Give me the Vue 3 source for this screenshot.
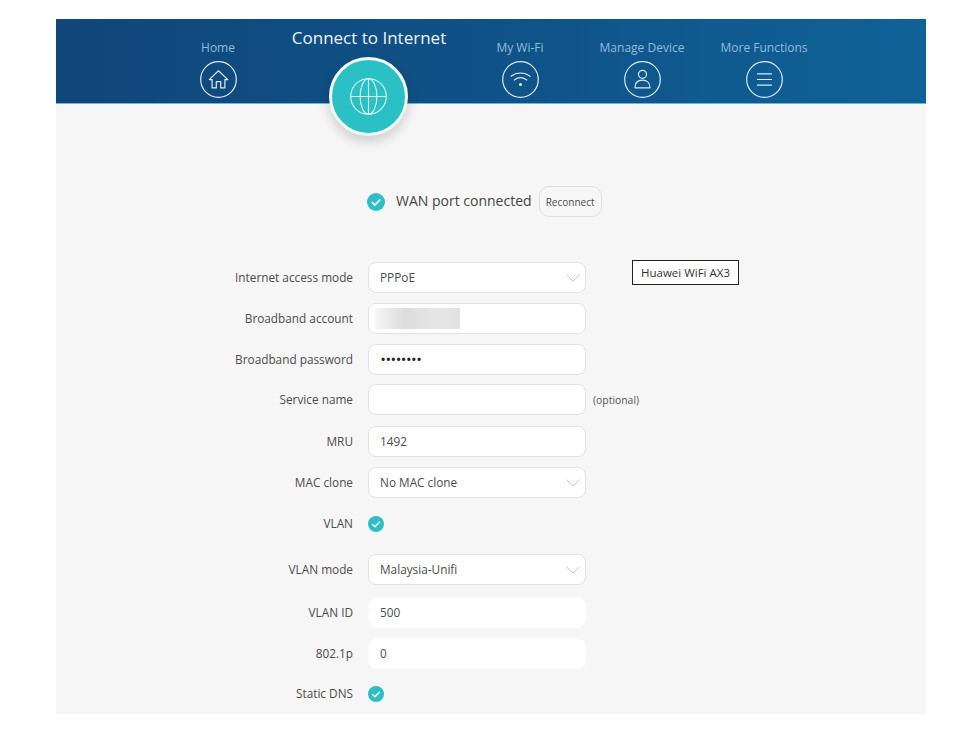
<script setup>
const navLeft = [{ label: 'Home', icon: 'home' }]
const navRight = [
  { label: 'My Wi-Fi', icon: 'wifi' },
  { label: 'Manage Device', icon: 'user' },
  { label: 'More Functions', icon: 'menu' },
]
const rows = [
  { label: 'Internet access mode', kind: 'select', value: 'PPPoE' },
  { label: 'Broadband account', kind: 'blur' },
  { label: 'Broadband password', kind: 'password', value: '••••••••', cls: 'tight' },
  { label: 'Service name', kind: 'input', value: '', note: '(optional)' },
  { label: 'MRU', kind: 'input', value: '1492', cls: 'mru' },
  { label: 'MAC clone', kind: 'select', value: 'No MAC clone' },
  { label: 'VLAN', kind: 'check', cls: 'vlan-check' },
  { label: 'VLAN mode', kind: 'select', value: 'Malaysia-Unifi', cls: 'vlan-mode' },
  { label: 'VLAN ID', kind: 'plain', value: '500' },
  { label: '802.1p', kind: 'plain', value: '0', cls: 'tight' },
  { label: 'Static DNS', kind: 'check' },
]
</script>

<template>
  <div class="screen">
    <div class="page">
      <header class="header">
        <div v-for="n in navLeft" :key="n.label" class="nav-item">
          <span class="nav-label">{{ n.label }}</span>
          <span class="nav-icon">
            <svg viewBox="0 0 37 37" width="37" height="37" fill="none" stroke="#dfeaf3" stroke-width="1.2" stroke-linejoin="round" stroke-linecap="round">
              <circle cx="18.5" cy="18.5" r="17.8" />
              <path d="M9.200 18.600 18.500 9.800l9.300 8.800h-2.900v8.300h-4.200v-6.200h-4.400v6.200h-4.200v-8.300z" />
            </svg>
          </span>
        </div>
        <div class="nav-item active">
          <span class="active-label">Connect to Internet</span>
          <span class="globe">
            <svg viewBox="0 0 37 37" width="37" height="37" fill="none" stroke="#e0f6f6" stroke-width="1.1">
              <circle cx="18.5" cy="18.5" r="17.8" />
              <ellipse cx="18.5" cy="18.5" rx="8.4" ry="17.8" />
              <path d="M18.5.7v35.6M.7 18.5h35.600" />
            </svg>
          </span>
        </div>
        <div v-for="n in navRight" :key="n.label" class="nav-item">
          <span class="nav-label">{{ n.label }}</span>
          <span class="nav-icon">
            <svg viewBox="0 0 37 37" width="37" height="37" fill="none" stroke="#dfeaf3" stroke-width="1.2" stroke-linecap="round" stroke-linejoin="round">
              <circle cx="18.5" cy="18.5" r="17.8" />
              <template v-if="n.icon === 'wifi'">
                <path d="M9 15.200c5.600-4.300 13.400-4.300 19 0M12.300 19c3.800-2.800 8.600-2.800 12.400 0" />
                <circle cx="18.500" cy="23.500" r="1.500" fill="#dfeaf3" stroke="none" />
              </template>
              <template v-else-if="n.icon === 'user'">
                <circle cx="18.500" cy="13.300" r="4" />
                <path d="M11 26.800c0-5 3.200-7.600 7.500-7.600s7.500 2.600 7.500 7.600z" />
              </template>
              <template v-else>
                <path d="M11.500 12.800h14M11.500 18.500h14M11.500 24.200h14" />
              </template>
            </svg>
          </span>
        </div>
      </header>

      <div class="status">
        <span class="check big">
          <svg viewBox="0 0 16 16"><path d="M4.300 8.200 7 10.800l4.800-5" /></svg>
        </span>
        <span class="status-text">WAN port connected</span>
        <button class="reconnect" type="button">Reconnect</button>
      </div>

      <form class="form" @submit.prevent>
        <div v-for="r in rows" :key="r.label" class="row" :class="r.cls">
          <label class="label">{{ r.label }}</label>
          <span v-if="r.kind === 'check'" class="check">
            <svg viewBox="0 0 16 16"><path d="M4.300 8.200 7 10.800l4.800-5" /></svg>
          </span>
          <div v-else class="field" :class="{ plain: r.kind === 'plain' }">
            <span v-if="r.kind === 'blur'" class="blurred"></span>
            <span v-else-if="r.kind === 'password'" class="dots">{{ r.value }}</span>
            <span v-else>{{ r.value }}</span>
            <svg v-if="r.kind === 'select'" class="chevron" viewBox="0 0 14 8" width="14" height="8" fill="none" stroke="#c4c6c8" stroke-width="1">
              <path d="M.5.800 7 7l6.500-6.200" />
            </svg>
          </div>
          <span v-if="r.note" class="note">{{ r.note }}</span>
        </div>
      </form>

      <div class="tooltip">Huawei WiFi AX3</div>
    </div>
  </div>
</template>

<style>
html, body { margin: 0; background: #fff; }
</style>

<style scoped>
.screen {
  width: 976px;
  height: 740px;
  padding-top: 19px;
  box-sizing: border-box;
  background: #fff;
  overflow: hidden;
  font-family: "Open Sans", "Noto Sans", "Liberation Sans", sans-serif;
  color: #4a4a4a;
}
.page {
  position: relative;
  width: 870px;
  height: 695px;
  margin-left: 56px;
  background: #f6f6f6;
  overflow: hidden;
}
.header {
  display: flex;
  box-sizing: border-box;
  height: 85px;
  padding-left: 101px;
  background: linear-gradient(90deg, #10467a 0%, #0f5287 50%, #0f6298 100%);
  border-bottom: 1px solid #6fb4dc;
}
.nav-item {
  width: 122px;
  display: flex;
  flex-direction: column;
  align-items: center;
  flex: none;
}
.nav-label {
  flex: none;
  margin-top: 20px;
  height: 17px;
  line-height: 17px;
  font-size: 12px;
  color: #8fbcdc;
  white-space: nowrap;
}
.nav-icon {
  display: block;
  flex: none;
  height: 37px;
  margin-top: 5px;
}
.nav-icon svg, .globe svg { display: block; }
.active {
  width: 180px;
  position: relative;
  z-index: 2;
}
.active-label {
  flex: none;
  margin-top: 8px;
  height: 21px;
  line-height: 21px;
  font-size: 17px;
  color: #eef4f9;
  white-space: nowrap;
}
.globe {
  flex: none;
  width: 79px;
  height: 79px;
  margin-top: 9px;
  margin-left: -1px;
  box-sizing: border-box;
  border: 3px solid #f2f8f8;
  border-radius: 50%;
  background: #2bc0c4;
  display: flex;
  align-items: center;
  justify-content: center;
  box-shadow: 0 6px 12px rgba(0, 0, 0, .16);
}
.status {
  display: flex;
  align-items: center;
  height: 31px;
  margin-top: 82px;
  padding-left: 311px;
}
.check {
  width: 16px;
  height: 16px;
  flex: none;
  border-radius: 50%;
  background: #2dbfc5;
  display: block;
}
.check svg {
  display: block;
  width: 100%;
  height: 100%;
  fill: none;
  stroke: #fff;
  stroke-width: 1.500;
}
.check.big { width: 18px; height: 18px; }
.status-text {
  margin-left: 11px;
  padding-bottom: 2px;
  font-size: 14px;
  color: #454545;
  white-space: nowrap;
}
.reconnect {
  margin-left: 7px;
  width: 63px;
  height: 31px;
  padding: 0;
  box-sizing: border-box;
  border: 1px solid #e0e0e0;
  border-radius: 10px;
  background: #f6f6f6;
  font: 400 10px "Open Sans", sans-serif;
  color: #4c4c4c;
}
.form {
  display: flex;
  flex-direction: column;
  margin-top: 45px;
}
.row {
  display: flex;
  align-items: center;
  height: 31px;
  margin-bottom: 10px;
}
.row.tight { margin-bottom: 9px; }
.row.vlan-check { margin-bottom: 15px; }
.row.vlan-mode { margin-bottom: 12px; }
.row.mru { margin-top: 1px; }
.label {
  width: 297px;
  flex: none;
  padding-bottom: 2px;
  text-align: right;
  font-size: 11.800px;
  color: #4c4c4c;
  white-space: nowrap;
}
.field {
  position: relative;
  flex: none;
  box-sizing: border-box;
  width: 218px;
  height: 31px;
  margin-left: 15px;
  padding: 0 0 2px 11px;
  display: flex;
  align-items: center;
  border: 1px solid #e2e2e2;
  border-radius: 8px;
  background: #fff;
  font-size: 11.800px;
  color: #4c4c4c;
}
.field.plain { border-color: #fcfcfc; }
.row > .check { margin-left: 15px; margin-top: 1px; }
.dots { margin-left: 1px; font-size: 11px; letter-spacing: 1px; color: #222; font-weight: 700; }
.blurred {
  position: absolute;
  left: 6px;
  top: 4px;
  width: 85px;
  height: 21px;
  background: linear-gradient(90deg, #f6f6f6 0%, #dcdcdc 35%, #e6e6e6 70%, #e2e2e2 100%);
}
.chevron { position: absolute; right: 5px; top: 11px; }
.note {
  margin-left: 7px;
  font-size: 10.400px;
  color: #555;
}
.tooltip {
  position: absolute;
  left: 576px;
  top: 241px;
  box-sizing: border-box;
  width: 107px;
  height: 25px;
  line-height: 23px;
  text-align: center;
  border: 1px solid #222;
  background: #fff;
  font-size: 11.500px;
  color: #333;
  white-space: nowrap;
}
</style>
